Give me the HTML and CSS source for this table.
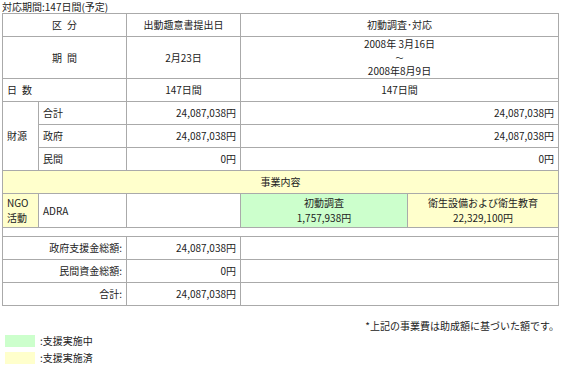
FILE: index.html
```html
<!DOCTYPE html>
<html lang="ja">
<head>
<meta charset="utf-8">
<title>対応期間</title>
<link rel="stylesheet" href="styles.css">
</head>
<body>
<div class="page">
  <p class="period">対応期間:147日間(予定)</p>
  <table class="report">
    <colgroup>
      <col class="c-a"><col class="c-b"><col class="c-c"><col class="c-d"><col class="c-e">
    </colgroup>
    <tr>
      <td colspan="2" class="center">区&ensp;分</td>
      <td class="center">出動趣意書提出日</td>
      <td colspan="2" class="center">初動調査･対応</td>
    </tr>
    <tr class="tall">
      <td colspan="2" class="center">期&ensp;間</td>
      <td class="center">2月23日</td>
      <td colspan="2" class="center">
        <div class="line">2008年 3月16日</div>
        <div class="tilde">～</div>
        <div class="line">2008年8月9日</div>
      </td>
    </tr>
    <tr>
      <td colspan="2">日&ensp;数</td>
      <td class="center">147日間</td>
      <td colspan="2" class="center">147日間</td>
    </tr>
    <tr>
      <td rowspan="3">財源</td>
      <td>合計</td>
      <td class="right">24,087,038円</td>
      <td colspan="2" class="right">24,087,038円</td>
    </tr>
    <tr>
      <td>政府</td>
      <td class="right">24,087,038円</td>
      <td colspan="2" class="right">24,087,038円</td>
    </tr>
    <tr>
      <td>民間</td>
      <td class="right">0円</td>
      <td colspan="2" class="right">0円</td>
    </tr>
    <tr>
      <td colspan="5" class="center done">事業内容</td>
    </tr>
    <tr class="ngo">
      <td class="done"><div class="line">NGO</div><div class="line">活動</div></td>
      <td>ADRA</td>
      <td></td>
      <td class="center active"><div class="line">初動調査</div><div class="line">1,757,938円</div></td>
      <td class="center done"><div class="line">衛生設備および衛生教育</div><div class="line">22,329,100円</div></td>
    </tr>
    <tr class="spacer">
      <td colspan="5"></td>
    </tr>
    <tr>
      <td colspan="2" class="right">政府支援金総額:</td>
      <td class="right">24,087,038円</td>
      <td colspan="2"></td>
    </tr>
    <tr>
      <td colspan="2" class="right">民間資金総額:</td>
      <td class="right">0円</td>
      <td colspan="2"></td>
    </tr>
    <tr>
      <td colspan="2" class="right">合計:</td>
      <td class="right">24,087,038円</td>
      <td colspan="2"></td>
    </tr>
  </table>
  <p class="note">*上記の事業費は助成額に基づいた額です。</p>
  <ul class="legend">
    <li class="legend-item"><span class="swatch active"></span>:支援実施中</li>
    <li class="legend-item"><span class="swatch done"></span>:支援実施済</li>
  </ul>
</div>
</body>
</html>
```
FILE: styles.css
```css
html, body {
  margin: 0;
  padding: 0;
  background: #ffffff;
}
body {
  font-family: "Noto Sans CJK JP", "Noto Sans", sans-serif;
  font-size: 10px;
  line-height: 12px;
  color: #222222;
}
.page {
  padding: 1px 0 0 2px;
  width: 557px;
}
.period {
  margin: 0;
  height: 12px;
  line-height: 12px;
}
.report {
  width: 557px;
  border-collapse: collapse;
  table-layout: fixed;
  border: 1px solid #aaaaaa;
}
.c-a { width: 36px; }
.c-b { width: 88px; }
.c-c { width: 114px; }
.c-d { width: 167px; }
.c-e { width: 151px; }
.report td {
  border: 1px solid #aaaaaa;
  padding: 5px 4px;
  vertical-align: middle;
  text-align: left;
}
.report .center { text-align: center; }
.report .right { text-align: right; }
.report .tall td { padding-top: 0; padding-bottom: 0; }
.report .ngo td { padding-top: 2px; padding-bottom: 2px; }
.report .spacer td { padding: 0; height: 8px; }
.line { line-height: 14.5px; }
.tilde { font-size: 8px; line-height: 12px; }
.done { background: #ffffcc; }
.active { background: #ccffcc; }
.note {
  margin: 14px 0 0 0;
  text-align: right;
  line-height: 12px;
}
.legend {
  list-style: none;
  margin: 3px 0 0 0;
  padding: 0 0 0 3px;
  display: flex;
  flex-direction: column;
  gap: 5px;
}
.legend-item {
  display: flex;
  align-items: center;
  gap: 5px;
  height: 12px;
}
.swatch {
  display: inline-block;
  width: 30px;
  height: 12px;
}
```
